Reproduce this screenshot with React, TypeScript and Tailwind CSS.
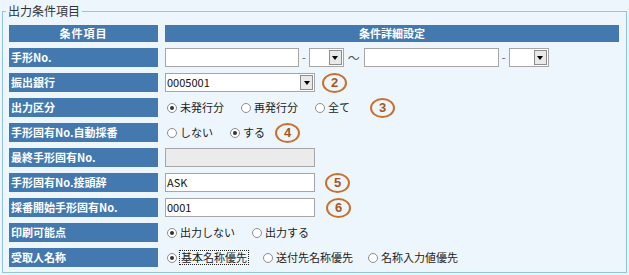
import React from "react"

const Label = ({ children }: { children: React.ReactNode }) => (
  <div className="h-[19px] bg-[#4479b0] text-white font-bold text-[11px] leading-[19px] pl-[2px] whitespace-nowrap">{children}</div>
)

const Badge = ({ n, className = "" }: { n: string; className?: string }) => (
  <span className={`w-[25px] h-[20px] rounded-[50%] border-2 border-[#c8702c] text-[#a8561c] font-bold text-[13px] leading-none flex items-center justify-center font-['Liberation_Sans',sans-serif] ${className}`}>{n}</span>
)

const Radio = ({ checked, label, focus = false }: { checked?: boolean; label: string; focus?: boolean }) => (
  <span className="flex items-center gap-[3px]">
    <span className="w-[10px] h-[10px] rounded-full border border-[#8c8c8c] bg-white flex items-center justify-center">
      {checked && <span className="w-[4px] h-[4px] rounded-full bg-[#333]" />}
    </span>
    <span className={`text-[11px] text-[#222] leading-[13px] ${focus ? "outline outline-1 outline-dotted outline-[#222] px-[1px]" : ""}`}>{label}</span>
  </span>
)

const Select = ({ w, value = "" }: { w: string; value?: string }) => (
  <div className={`${w} h-[19px] bg-white border border-[#a6a6a6] flex items-center justify-between pl-[1px] pr-[1px]`}>
    <span className="text-[11px] text-[#111]">{value}</span>
    <span className="w-[13px] h-[15px] bg-[#e9e9e9] border border-[#8e8e8e] flex items-center justify-center">
      <svg width="6" height="4" viewBox="0 0 6 4"><path d="M0 0h6L3 4z" fill="#000" /></svg>
    </span>
  </div>
)

const Input = ({ w, value = "", disabled = false }: { w: string; value?: string; disabled?: boolean }) => (
  <div className={`${w} h-[19px] border border-[#a6a6a6] ${disabled ? "bg-[#ebebeb]" : "bg-white"} text-[11px] text-[#111] leading-[17px] pl-[1px]`}>{value}</div>
)

export default function App() {
  return (
    <div className="w-[629px] h-[275px] bg-[#eef6fd] pt-[3px] px-[2px] font-['Noto_Sans_CJK_JP',sans-serif]">
      <fieldset className="border border-[#93c4e6] h-[270px] px-[6px]">
        <legend className="-ml-[3px] px-[2px] text-[12px] leading-[16px] text-[#333]">出力条件項目</legend>
        <div className="grid grid-cols-[149px_454px] gap-x-[7px] gap-y-[6px] mt-[6px]">
          <div className="h-[17px] bg-[#4479b0] text-white font-bold text-[11px] leading-[17px] text-center tracking-[1px]">条件項目</div>
          <div className="h-[17px] bg-[#4479b0] text-white font-bold text-[11px] leading-[17px] text-center">条件詳細設定</div>

          <Label>手形No.</Label>
          <div className="flex items-center h-[19px]">
            <Input w="w-[134px]" />
            <span className="mx-[3px] text-[11px] text-[#555]">-</span>
            <Select w="w-[35px]" />
            <span className="mx-[4px] text-[12px] text-[#555]">〜</span>
            <Input w="w-[135px]" />
            <span className="mx-[3px] text-[11px] text-[#555]">-</span>
            <Select w="w-[40px]" />
          </div>

          <Label>振出銀行</Label>
          <div className="flex items-center h-[19px] gap-[7px]">
            <Select w="w-[150px]" value="0005001" />
            <Badge n="2" />
          </div>

          <Label>出力区分</Label>
          <div className="flex items-center h-[19px] gap-[17px] pl-[2px]">
            <Radio checked label="未発行分" />
            <Radio label="再発行分" />
            <Radio label="全て" />
            <Badge n="3" className="ml-[3px]" />
          </div>

          <Label>手形固有No.自動採番</Label>
          <div className="flex items-center h-[19px] gap-[17px] pl-[2px]">
            <Radio label="しない" />
            <Radio checked label="する" />
            <Badge n="4" className="-ml-[7px]" />
          </div>

          <Label>最終手形固有No.</Label>
          <div className="flex items-center h-[19px]">
            <Input w="w-[150px]" disabled />
          </div>

          <Label>手形固有No.接頭辞</Label>
          <div className="flex items-center h-[19px] gap-[10px]">
            <Input w="w-[150px]" value="ASK" />
            <Badge n="5" />
          </div>

          <Label>採番開始手形固有No.</Label>
          <div className="flex items-center h-[19px] gap-[11px]">
            <Input w="w-[150px]" value="0001" />
            <Badge n="6" />
          </div>

          <Label>印刷可能点</Label>
          <div className="flex items-center h-[19px] gap-[17px] pl-[2px]">
            <Radio checked label="出力しない" />
            <Radio label="出力する" />
          </div>

          <Label>受取人名称</Label>
          <div className="flex items-center h-[19px] gap-[15px] pl-[2px]">
            <Radio checked focus label="基本名称優先" />
            <Radio label="送付先名称優先" />
            <Radio label="名称入力値優先" />
          </div>
        </div>
      </fieldset>
    </div>
  )
}
